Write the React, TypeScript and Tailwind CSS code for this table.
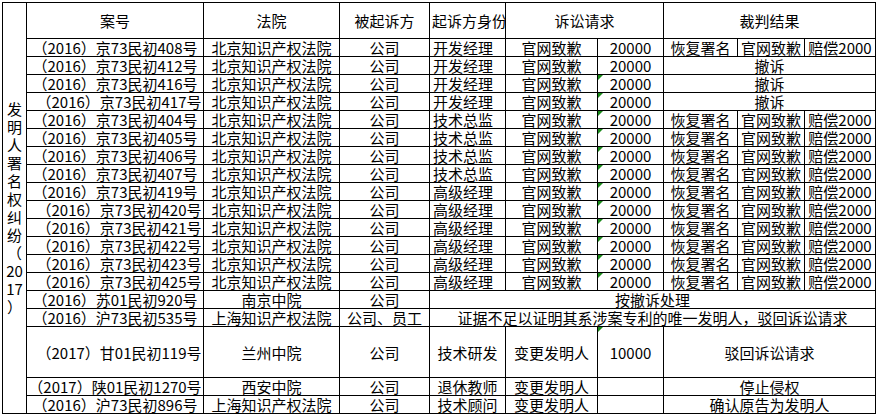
import type { ReactNode } from "react";

type Row = {
  no: string;
  role: string;
  withdrawn?: boolean;
  mark?: boolean;
  shift?: boolean;
};

const ROWS: Row[] = [
  { no: "（2016）京73民初408号", role: "开发经理" },
  { no: "（2016）京73民初412号", role: "开发经理", withdrawn: true },
  { no: "（2016）京73民初416号", role: "开发经理", withdrawn: true, mark: true },
  { no: "（2016）京73民初417号", role: "开发经理", withdrawn: true, mark: true, shift: true },
  { no: "（2016）京73民初404号", role: "技术总监", mark: true },
  { no: "（2016）京73民初405号", role: "技术总监", mark: true },
  { no: "（2016）京73民初406号", role: "技术总监", mark: true },
  { no: "（2016）京73民初407号", role: "技术总监", mark: true },
  { no: "（2016）京73民初419号", role: "高级经理", mark: true },
  { no: "（2016）京73民初420号", role: "高级经理", mark: true, shift: true },
  { no: "（2016）京73民初421号", role: "高级经理", mark: true, shift: true },
  { no: "（2016）京73民初422号", role: "高级经理", mark: true, shift: true },
  { no: "（2016）京73民初423号", role: "高级经理", mark: true, shift: true },
  { no: "（2016）京73民初425号", role: "高级经理", mark: true, shift: true },
];

const SIDE = ["发", "明", "人", "署", "名", "权", "纠", "纷", "（", "20", "17", "）"];

function Cell({ children, className = "" }: { children?: ReactNode; className?: string }) {
  return (
    <div className={`relative flex items-center justify-center whitespace-nowrap bg-white ${className}`}>
      {children}
    </div>
  );
}

// little green corner Excel draws on numbers stored as text
function Mark() {
  return (
    <span className="absolute left-0 top-0 h-0 w-0 border-r-[5px] border-t-[5px] border-r-transparent border-t-[#1a8a1a]" />
  );
}

export default function App() {
  return (
    <div className="min-h-[417px] bg-white pl-[2px] pt-[2px] font-['Noto_Sans_CJK_SC',sans-serif] text-[15px] leading-[17px] text-black">
      <div className="grid w-fit grid-cols-[23px_176px_135px_89px_75px_91px_65px_73px_66px_70px] grid-rows-[35px_repeat(16,17px)_50px_17px_17px] gap-px bg-black p-px">
        {/* side label */}
        <Cell className="row-span-20 flex-col leading-[18px]">
          {SIDE.map((c, i) => (
            <span key={i}>{c}</span>
          ))}
        </Cell>

        {/* header */}
        <Cell>案号</Cell>
        <Cell>法院</Cell>
        <Cell>被起诉方</Cell>
        <Cell className="justify-start pl-[2px]">起诉方身份</Cell>
        <Cell className="col-span-2">诉讼请求</Cell>
        <Cell className="col-span-3">裁判结果</Cell>

        {ROWS.map((r) => (
          <div key={r.no} className="contents">
            <Cell className={r.shift ? "pl-[8px]" : ""}>{r.no}</Cell>
            <Cell>北京知识产权法院</Cell>
            <Cell>公司</Cell>
            <Cell className="justify-start pl-[3px]">{r.role}</Cell>
            <Cell>官网致歉</Cell>
            <Cell>
              {r.mark && <Mark />}
              20000
            </Cell>
            {r.withdrawn ? (
              <Cell className="col-span-3">撤诉</Cell>
            ) : (
              <>
                <Cell>恢复署名</Cell>
                <Cell>官网致歉</Cell>
                <Cell>赔偿2000</Cell>
              </>
            )}
          </div>
        ))}

        <Cell>（2016）苏01民初920号</Cell>
        <Cell>南京中院</Cell>
        <Cell>公司</Cell>
        <Cell className="col-span-6">按撤诉处理</Cell>

        <Cell>（2016）沪73民初535号</Cell>
        <Cell>上海知识产权法院</Cell>
        <Cell>公司、员工</Cell>
        <Cell className="col-span-6">证据不足以证明其系涉案专利的唯一发明人，驳回诉讼请求</Cell>

        <Cell className="pl-[8px]">（2017）甘01民初119号</Cell>
        <Cell>兰州中院</Cell>
        <Cell>公司</Cell>
        <Cell>技术研发</Cell>
        <Cell>变更发明人</Cell>
        <Cell>
          <Mark />
          10000
        </Cell>
        <Cell className="col-span-3">驳回诉讼请求</Cell>

        <Cell>（2017）陕01民初1270号</Cell>
        <Cell>西安中院</Cell>
        <Cell>公司</Cell>
        <Cell>退休教师</Cell>
        <Cell>变更发明人</Cell>
        <Cell />
        <Cell className="col-span-3">停止侵权</Cell>

        <Cell>（2016）沪73民初896号</Cell>
        <Cell>上海知识产权法院</Cell>
        <Cell>公司</Cell>
        <Cell>技术顾问</Cell>
        <Cell>变更发明人</Cell>
        <Cell />
        <Cell className="col-span-3">确认原告为发明人</Cell>
      </div>
    </div>
  );
}
